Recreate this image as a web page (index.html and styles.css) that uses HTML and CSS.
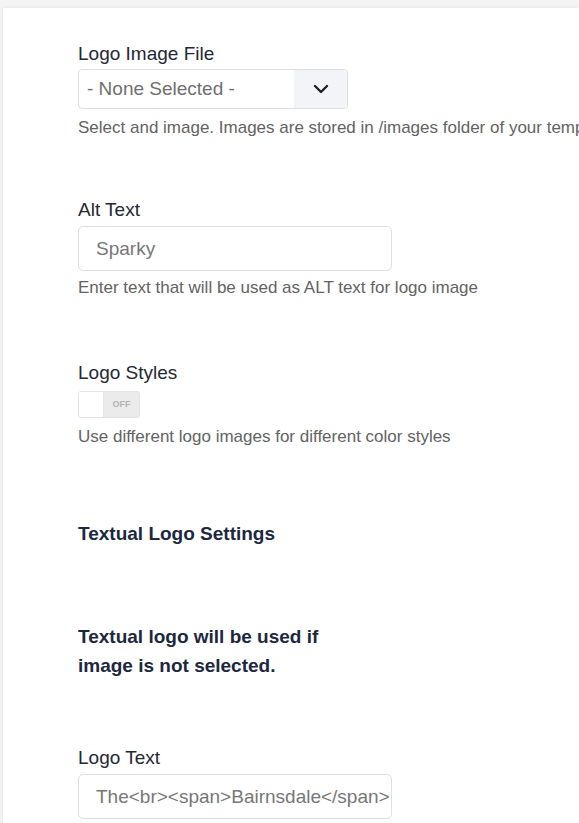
FILE: index.html
```html
<!DOCTYPE html>
<html lang="en">
<head>
    <meta charset="UTF-8">
    <meta name="viewport" content="width=device-width, initial-scale=1.0">
    <title>Logo Settings</title>
    <link rel="stylesheet" href="styles.css">
</head>
<body>
    <div class="panel">
        <div class="field">
            <label class="field-label">Logo Image File</label>
            <div class="select">
                <span class="select-value">- None Selected -</span>
                <span class="select-arrow">
                    <svg width="16" height="10" viewBox="0 0 16 10"><path d="M2 2 L8 8 L14 2" fill="none" stroke="#1c1f26" stroke-width="2.4" stroke-linecap="round" stroke-linejoin="round"/></svg>
                </span>
            </div>
            <div class="help help-select">Select and image. Images are stored in /images folder of your template</div>
        </div>

        <div class="field field-alt">
            <label class="field-label">Alt Text</label>
            <div class="text-input">Sparky</div>
            <div class="help">Enter text that will be used as ALT text for logo image</div>
        </div>

        <div class="field field-styles">
            <label class="field-label">Logo Styles</label>
            <div class="toggle">
                <span class="toggle-knob"></span>
                <span class="toggle-text">OFF</span>
            </div>
            <div class="help help-toggle">Use different logo images for different color styles</div>
        </div>

        <h3 class="section-title">Textual Logo Settings</h3>

        <p class="section-note">Textual logo will be used if<br>image is not selected.</p>

        <div class="field field-text">
            <label class="field-label">Logo Text</label>
            <div class="text-input">The&lt;br&gt;&lt;span&gt;Bairnsdale&lt;/span&gt;</div>
        </div>
    </div>
</body>
</html>
```

FILE: styles.css
```css
body {
    margin: 0;
    font-family: "Liberation Sans", Arial, sans-serif;
    background-color: #f4f4f4;
    overflow: hidden;
}

.panel {
    margin-top: 8px;
    margin-left: 3px;
    background-color: #fff;
    box-shadow: 0 0 4px rgba(0, 0, 0, 0.08);
    padding: 34px 0 40px 75px;
    min-height: 900px;
}

.field-label {
    display: block;
    font-size: 19px;
    line-height: 24px;
    color: #242833;
}

.select {
    display: flex;
    width: 268px;
    height: 38px;
    margin-top: 3px;
    border: 1px solid #dcdfe4;
    border-radius: 4px;
    overflow: hidden;
}

.select-value {
    flex: 1;
    padding-left: 8px;
    font-size: 19px;
    line-height: 38px;
    color: #6f6f6f;
}

.select-arrow {
    width: 53px;
    background-color: #f2f4f8;
    display: flex;
    align-items: center;
    justify-content: center;
}

.help {
    margin-top: 7px;
    font-size: 17px;
    line-height: 20px;
    color: #636363;
    white-space: nowrap;
}

.help-select,
.help-toggle {
    margin-top: 9px;
}

.field-alt {
    margin-top: 60px;
}

.field-styles {
    margin-top: 63px;
}

.field-text {
    margin-top: 66px;
}

.text-input {
    width: 295px;
    height: 43px;
    margin-top: 4px;
    padding-left: 17px;
    border: 1px solid #dcdfe4;
    border-radius: 5px;
    font-size: 19px;
    line-height: 43px;
    color: #777;
    white-space: nowrap;
    overflow: hidden;
}

.toggle {
    display: flex;
    width: 60px;
    height: 25px;
    margin-top: 6px;
    border: 1px solid #e3e3e3;
    border-radius: 3px;
    background-color: #ebebeb;
    overflow: hidden;
}

.toggle-knob {
    width: 24px;
    background-color: #fff;
    border-right: 1px solid #e6e6e6;
}

.toggle-text {
    flex: 1;
    text-align: center;
    font-size: 9px;
    font-weight: bold;
    line-height: 25px;
    color: #b3b3b3;
}

.section-title {
    margin: 75px 0 0;
    font-size: 19px;
    line-height: 24px;
    font-weight: bold;
    color: #1d2840;
}

.section-note {
    margin: 76px 0 0;
    font-size: 19px;
    line-height: 29px;
    font-weight: bold;
    color: #1d2840;
}
```
